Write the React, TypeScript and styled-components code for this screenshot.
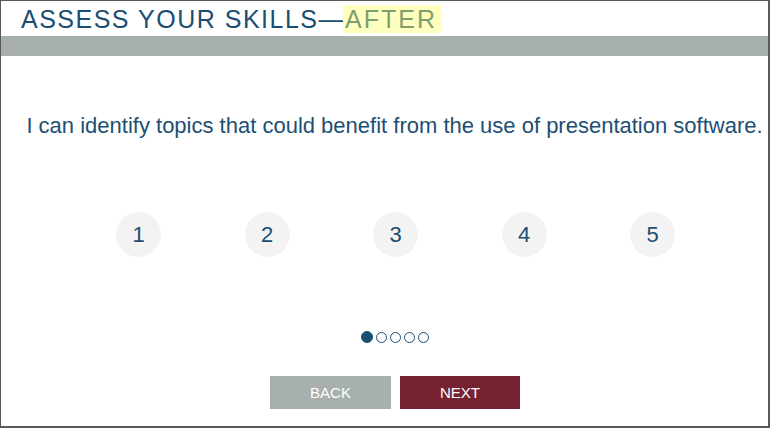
import React from "react";
import styled, { createGlobalStyle } from "styled-components";

const Global = createGlobalStyle`
  html, body { margin: 0; padding: 0; background: #fff; }
  body { font-family: "Liberation Sans", Arial, sans-serif; }
`;

const Frame = styled.div`
  box-sizing: border-box;
  width: 770px;
  height: 428px;
  border-style: solid;
  border-color: #595959;
  border-width: 1px 2px 2px 1px;
  display: flex;
  flex-direction: column;
  overflow: hidden;
`;

const TitleRow = styled.div`
  height: 35px;
  padding: 4px 0 0 20px;
  box-sizing: border-box;
`;

const Title = styled.h1`
  margin: 0;
  font-size: 25px;
  line-height: 28px;
  font-weight: normal;
  color: #1a4e72;
  letter-spacing: 1.5px;
  white-space: nowrap;
`;

const Highlight = styled.span`
  background: #ffffc0;
  color: #7f9e6e;
  letter-spacing: 2px;
  padding: 0 4px 0 2px;
  margin-left: -2px;
`;

const Bar = styled.div`
  height: 20px;
  background: #a8b0ae;
`;

const Question = styled.p`
  margin: 57px 0 0;
  padding-left: 20px;
  text-align: center;
  font-size: 22px;
  line-height: 26px;
  color: #1d4f73;
  white-space: nowrap;
`;

const Scale = styled.div`
  margin-top: 73px;
  display: grid;
  grid-template-columns: repeat(5, 45px);
  column-gap: 83.5px;
  padding-left: 115px;
`;

const Choice = styled.button`
  width: 45px;
  height: 45px;
  border-radius: 50%;
  border: none;
  background: #f3f3f3;
  color: #1a4e72;
  font-family: "Liberation Sans", Arial, sans-serif;
  font-size: 22px;
  padding: 0;
  display: flex;
  align-items: center;
  justify-content: center;
`;

const Dots = styled.div`
  margin-top: 74px;
  display: flex;
  justify-content: center;
  align-items: center;
  gap: 3px;
  padding-left: 21px;
`;

const Dot = styled.span<{ $active?: boolean }>`
  box-sizing: border-box;
  width: ${(p) => (p.$active ? 12 : 11)}px;
  height: ${(p) => (p.$active ? 12 : 11)}px;
  border-radius: 50%;
  border: 1.5px solid #1a4e72;
  background: ${(p) => (p.$active ? "#1a4e72" : "#fff")};
`;

const Buttons = styled.div`
  margin-top: 33px;
  display: flex;
  justify-content: center;
  gap: 9px;
  padding-left: 21px;
`;

const NavButton = styled.button<{ $primary?: boolean }>`
  width: ${(p) => (p.$primary ? 120 : 121)}px;
  height: 33px;
  border: none;
  background: ${(p) => (p.$primary ? "#772232" : "#a8b0ae")};
  color: #fff;
  font-family: "Liberation Sans", Arial, sans-serif;
  font-size: 15px;
  padding: 0;
`;

export default function App() {
  const dots = [0, 1, 2, 3, 4];
  return (
    <>
      <Global />
      <Frame>
        <TitleRow>
          <Title>
            ASSESS YOUR SKILLS—<Highlight>AFTER</Highlight>
          </Title>
        </TitleRow>
        <Bar />
        <Question>
          I can identify topics that could benefit from the use of presentation software.
        </Question>
        <Scale>
          {[1, 2, 3, 4, 5].map((n) => (
            <Choice key={n}>{n}</Choice>
          ))}
        </Scale>
        <Dots>
          {dots.map((i) => (
            <Dot key={i} $active={i === 0} />
          ))}
        </Dots>
        <Buttons>
          <NavButton>BACK</NavButton>
          <NavButton $primary>NEXT</NavButton>
        </Buttons>
      </Frame>
    </>
  );
}
